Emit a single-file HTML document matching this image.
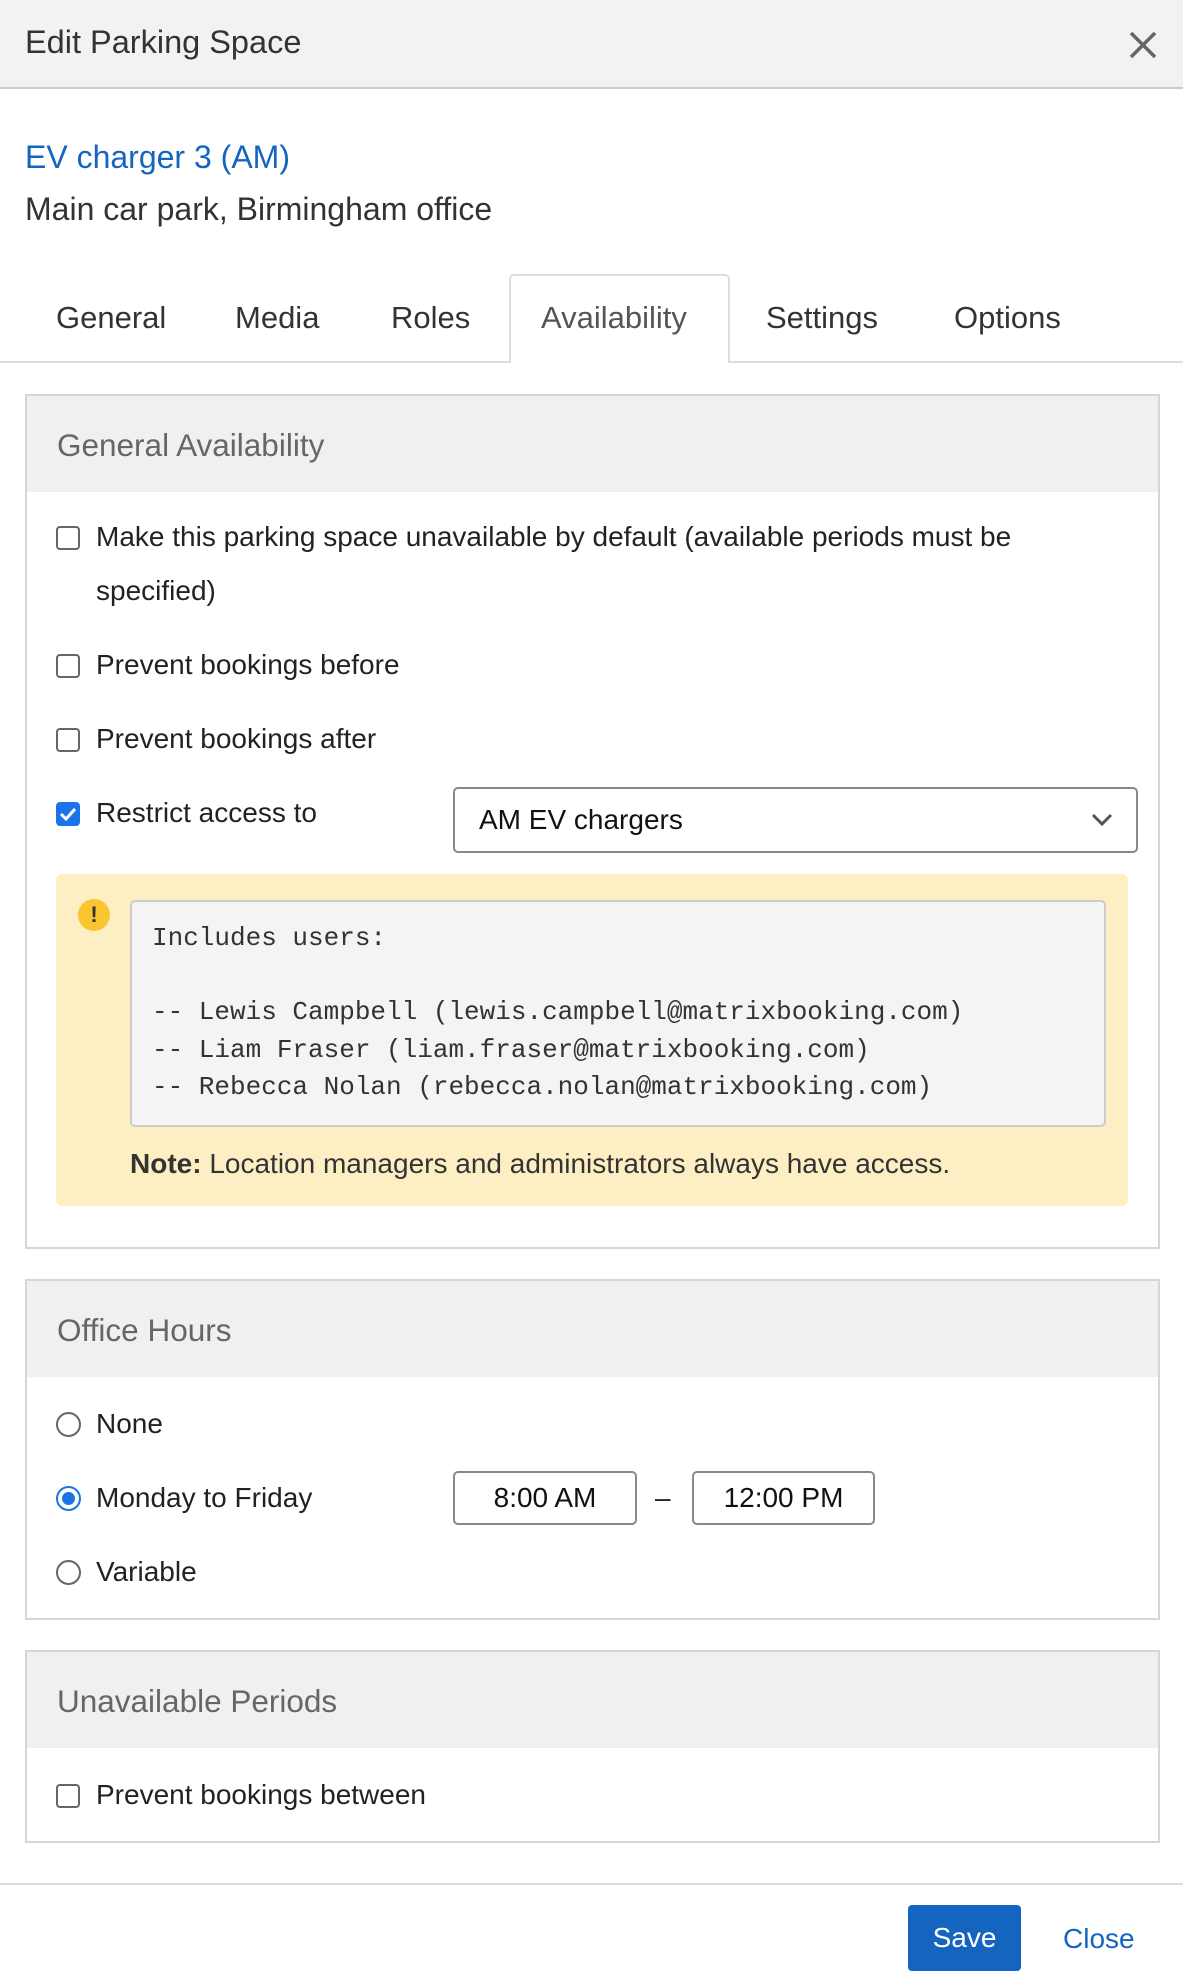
<!DOCTYPE html>
<html><head><meta charset="utf-8"><style>
*{box-sizing:border-box;margin:0;padding:0}
body{width:1183px;height:1987px;background:#fff;font-family:"Liberation Sans",Arial,sans-serif;color:#222;position:relative;overflow:hidden}
.a{position:absolute;white-space:nowrap}
.hdr{left:0;top:0;width:1183px;height:89px;background:#f2f2f2;border-bottom:2px solid #ccc}
.t{font-size:28px;line-height:30px}
.panel{position:absolute;left:25px;width:1135px;border:2px solid #d6d6d6;background:#fff}
.ph{background:#f0f0f0;height:96px;padding-left:30px;font-size:31.5px;line-height:98px;color:#666}
.cb{position:absolute;width:24px;height:24px;border:2px solid #666;border-radius:4px;background:#fff}
.rb{position:absolute;width:25px;height:25px;border:2px solid #666;border-radius:50%;background:#fff}
.mono{font-family:"Liberation Mono",monospace;font-size:26px;color:#333}
.tab{top:300px;font-size:31px;color:#333}
</style></head><body>
<div class="a hdr"></div>
<div class="a" style="left:25px;top:24px;font-size:32.5px;color:#333">Edit Parking Space</div>
<svg class="a" style="left:1128px;top:30px" width="30" height="30"><path d="M3 3L27 27M27 3L3 27" stroke="#666" stroke-width="3.5"/></svg>
<div class="a" style="left:25px;top:139px;font-size:32px;color:#1565c0">EV charger 3 (AM)</div>
<div class="a" style="left:25px;top:191px;font-size:32px;color:#333">Main car park, Birmingham office</div>
<div class="a" style="left:0;top:361px;width:1183px;height:2px;background:#ddd"></div>
<div class="a" style="left:509px;top:274px;width:221px;height:89px;border:2px solid #ddd;border-bottom:none;border-radius:5px 5px 0 0;background:#fff"></div>
<div class="a tab" style="left:56px">General</div>
<div class="a tab" style="left:235px">Media</div>
<div class="a tab" style="left:391px">Roles</div>
<div class="a tab" style="left:541px;color:#555">Availability</div>
<div class="a tab" style="left:766px">Settings</div>
<div class="a tab" style="left:954px">Options</div>

<div class="panel" style="top:394px;height:855px"><div class="ph">General Availability</div></div>
<div class="cb" style="left:56px;top:526px"></div>
<div class="a t" style="left:96px;top:522px">Make this parking space unavailable by default (available periods must be</div>
<div class="a t" style="left:96px;top:576px">specified)</div>
<div class="cb" style="left:56px;top:654px"></div>
<div class="a t" style="left:96px;top:650px">Prevent bookings before</div>
<div class="cb" style="left:56px;top:728px"></div>
<div class="a t" style="left:96px;top:724px">Prevent bookings after</div>
<div class="a" style="left:56px;top:802px;width:24px;height:24px;border-radius:4px;background:#1a73e8"><svg width="24" height="24"><path d="M5 12l5 5 9-10" stroke="#fff" stroke-width="3" fill="none"/></svg></div>
<div class="a t" style="left:96px;top:798px">Restrict access to</div>
<div class="a" style="left:453px;top:787px;width:685px;height:66px;border:2px solid #888;border-radius:5px"></div>
<div class="a t" style="left:479px;top:805px;color:#111">AM EV chargers</div>
<svg class="a" style="left:1090px;top:810px" width="24" height="20"><path d="M3 5l9 9 9-9" stroke="#555" stroke-width="3" fill="none"/></svg>
<div class="a" style="left:56px;top:874px;width:1072px;height:332px;background:#fdefc3;border-radius:6px"></div>
<div class="a" style="left:78px;top:899px;width:32px;height:32px;border-radius:50%;background:#f9c531;color:#333;font-weight:bold;font-size:22px;text-align:center;line-height:32px">!</div>
<div class="a" style="left:130px;top:900px;width:976px;height:227px;background:#f4f4f4;border:2px solid #ccc;border-radius:5px"></div>
<div class="a mono" style="left:152px;top:923px">Includes users:</div>
<div class="a mono" style="left:152px;top:997px">-- Lewis Campbell (lewis.campbell@matrixbooking.com)</div>
<div class="a mono" style="left:152px;top:1035px">-- Liam Fraser (liam.fraser@matrixbooking.com)</div>
<div class="a mono" style="left:152px;top:1072px">-- Rebecca Nolan (rebecca.nolan@matrixbooking.com)</div>
<div class="a t" style="left:130px;top:1149px;color:#333"><b>Note:</b> Location managers and administrators always have access.</div>

<div class="panel" style="top:1279px;height:341px"><div class="ph">Office Hours</div></div>
<div class="rb" style="left:56px;top:1412px"></div>
<div class="a t" style="left:96px;top:1409px">None</div>
<div class="rb" style="left:56px;top:1486px;border-color:#1a73e8"><div style="position:absolute;left:4px;top:4px;width:13px;height:13px;border-radius:50%;background:#1a73e8"></div></div>
<div class="a t" style="left:96px;top:1483px">Monday to Friday</div>
<div class="a t" style="left:453px;top:1471px;width:184px;height:54px;border:2px solid #888;border-radius:5px;text-align:center;line-height:50px;color:#111">8:00 AM</div>
<div class="a t" style="left:655px;top:1483px">–</div>
<div class="a t" style="left:692px;top:1471px;width:183px;height:54px;border:2px solid #888;border-radius:5px;text-align:center;line-height:50px;color:#111">12:00 PM</div>
<div class="rb" style="left:56px;top:1560px"></div>
<div class="a t" style="left:96px;top:1557px">Variable</div>

<div class="panel" style="top:1650px;height:193px"><div class="ph">Unavailable Periods</div></div>
<div class="cb" style="left:56px;top:1784px"></div>
<div class="a t" style="left:96px;top:1780px">Prevent bookings between</div>

<div class="a" style="left:0;top:1883px;width:1183px;height:2px;background:#ddd"></div>
<div class="a" style="left:908px;top:1905px;width:113px;height:66px;background:#1565c0;border-radius:4px;color:#fff;font-size:28px;text-align:center;line-height:66px">Save</div>
<div class="a" style="left:1063px;top:1923px;font-size:28px;color:#1565c0">Close</div>
</body></html>
